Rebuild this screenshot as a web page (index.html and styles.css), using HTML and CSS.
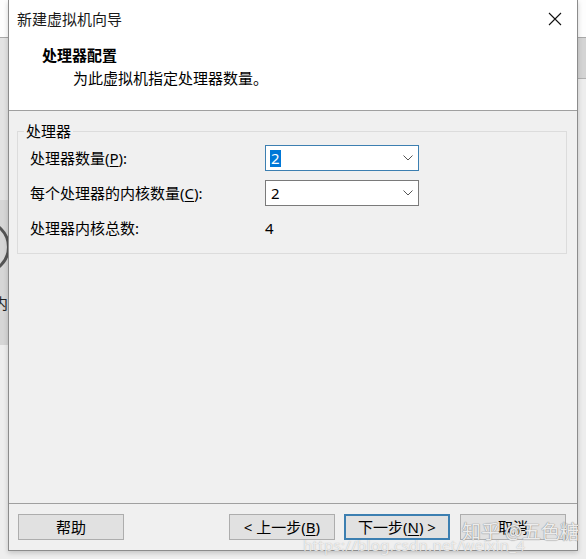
FILE: index.html
```html
<!DOCTYPE html>
<html lang="zh-CN">
<head>
<meta charset="utf-8">
<title>新建虚拟机向导</title>
<link rel="stylesheet" href="styles.css">
</head>
<body>
<div class="desktop">
  <div class="bg-ring"></div>
  <div class="bg-char">内</div>
  <div class="dialog">
    <div class="titlebar">
      <span class="title">新建虚拟机向导</span>
      <svg class="close" width="14" height="14" viewBox="0 0 14 14"><path d="M1 1 L13 13 M13 1 L1 13" stroke="#111" stroke-width="1.1" fill="none"/></svg>
    </div>
    <div class="header">
      <div class="heading">处理器配置</div>
      <div class="subtitle">为此虚拟机指定处理器数量。</div>
    </div>
    <div class="content">
      <fieldset class="group">
        <legend class="legend">处理器</legend>
        <div class="grid">
          <div class="label">处理器数量(<u>P</u>):</div>
          <div class="combo focused"><span class="sel">2</span><svg class="chev" width="10" height="6" viewBox="0 0 10 6"><path d="M0.5 0.5 L5 5 L9.5 0.5" stroke="#555" stroke-width="1" fill="none"/></svg></div>
          <div class="label">每个处理器的内核数量(<u>C</u>):</div>
          <div class="combo"><span class="val">2</span><svg class="chev" width="10" height="6" viewBox="0 0 10 6"><path d="M0.5 0.5 L5 5 L9.5 0.5" stroke="#555" stroke-width="1" fill="none"/></svg></div>
          <div class="label">处理器内核总数:</div>
          <div class="total">4</div>
        </div>
      </fieldset>
    </div>
    <div class="footer">
      <button class="btn">帮助</button>
      <span class="spacer"></span>
      <button class="btn">&lt; 上一步(<u>B</u>)</button>
      <button class="btn primary">下一步(<u>N</u>) &gt;</button>
      <button class="btn cancel">取消</button>
    </div>
  </div>
  <div class="watermark-url">https://blog.csdn.net/weixin_4</div>
  <div class="watermark">知乎 @五色糖</div>
</div>
</body>
</html>
```
FILE: styles.css
```css
html, body {
  margin: 0;
  padding: 0;
}
body {
  font-family: "Noto Sans", "Noto Sans CJK SC", sans-serif;
  font-size: 15px;
  color: #000;
}
.desktop {
  position: relative;
  width: 586px;
  height: 559px;
  overflow: hidden;
  background:
    linear-gradient(to bottom, #fdfdfd 0, #fdfdfd 37px, #a8a8a8 37px, #a8a8a8 38px, #e3e3e3 38px, #e3e3e3 200px, #d6d6d6 200px, #d6d6d6 345px, #eeeeee 345px);
}
.desktop::after {
  content: "";
  position: absolute;
  right: 0;
  top: 0;
  width: 8px;
  height: 559px;
  background: linear-gradient(to bottom, #fdfdfd 0, #fdfdfd 37px, #a8a8a8 37px, #a8a8a8 38px, #d4d4d4 38px, #d4d4d4 78px, #b0b0b0 78px, #b0b0b0 79px, #ededed 79px);
}
.bg-ring {
  position: absolute;
  left: -44px;
  top: 220px;
  width: 48px;
  height: 48px;
  border: 3px solid #555;
  border-radius: 50%;
}
.bg-char {
  position: absolute;
  left: -7px;
  top: 294px;
  font-size: 15px;
  line-height: 18px;
  color: #222;
}
.dialog {
  position: relative;
  z-index: 1;
  margin-left: 8px;
  width: 568px;
  height: 550px;
  border: 1px solid #8c8c8c;
  border-top: none;
  background: #f0f0f0;
  display: flex;
  flex-direction: column;
  box-shadow: 0 2px 5px rgba(0,0,0,0.18);
}
.titlebar {
  height: 38px;
  background: #fff;
  display: flex;
  align-items: center;
  padding-left: 8px;
  padding-right: 15px;
  flex: none;
}
.title {
  flex: 1;
  line-height: 20px;
  color: #1a1a1a;
}
.close {
  display: block;
}
.header {
  background: #fff;
  border-bottom: 1px solid #a0a0a0;
  flex: none;
  padding-left: 33px;
  box-sizing: border-box;
  height: 73px;
  padding-top: 7px;
}
.heading {
  font-weight: bold;
  line-height: 20px;
}
.subtitle {
  line-height: 20px;
  margin-top: 3px;
  padding-left: 31px;
}
.content {
  flex: 1;
  padding: 11px 10px 0 8px;
}
.group {
  margin: 0;
  padding: 5px 12px 12px 12px;
  border: 1px solid #dcdcdc;
  min-inline-size: 0;
}
.legend {
  padding: 0 2px;
  margin-left: -6px;
  line-height: 18px;
}
.grid {
  display: grid;
  grid-template-columns: 235px 154px;
  grid-auto-rows: 26px;
  row-gap: 9px;
  align-items: center;
}
.label {
  line-height: 20px;
  white-space: nowrap;
}
.label u, .btn u {
  text-decoration: underline;
  text-underline-offset: 2px;
}
.combo {
  height: 26px;
  box-sizing: border-box;
  border: 1px solid #7a7a7a;
  background: #fff;
  display: flex;
  align-items: center;
  padding-left: 4px;
  padding-right: 5px;
}
.combo.focused {
  border-color: #3c7fb1;
}
.sel {
  background: #0078d7;
  color: #fff;
  line-height: 17px;
  padding: 0 1px;
}
.val {
  line-height: 17px;
  padding-left: 1px;
}
.chev {
  margin-left: auto;
}
.total {
  line-height: 20px;
}
.footer {
  height: 47px;
  box-sizing: border-box;
  border-top: 1px solid #a0a0a0;
  flex: none;
  display: flex;
  align-items: flex-start;
  padding: 10px 11px 0 9px;
}
.spacer {
  flex: 1;
}
.btn {
  font: inherit;
  width: 106px;
  height: 26px;
  box-sizing: border-box;
  background: #e1e1e1;
  border: 1px solid #adadad;
  padding: 0;
  line-height: 20px;
  color: #000;
  margin: 0;
}
.btn.primary {
  border: 2px solid #3c7fb1;
  margin-left: 9px;
}
.btn.cancel {
  margin-left: 10px;
}
.watermark-url {
  position: absolute;
  z-index: 2;
  left: 303px;
  top: 536px;
  font-size: 15px;
  line-height: 18px;
  color: rgba(255,255,255,0.75);
  text-shadow: 0 0 1px rgba(120,120,120,0.6);
  letter-spacing: 0.3px;
}
.watermark {
  position: absolute;
  z-index: 2;
  left: 462px;
  top: 520px;
  font-size: 19px;
  line-height: 24px;
  color: rgba(255,255,255,0.85);
  text-shadow: 0 0 1px #888, 0 0 1px #888;
}
```
